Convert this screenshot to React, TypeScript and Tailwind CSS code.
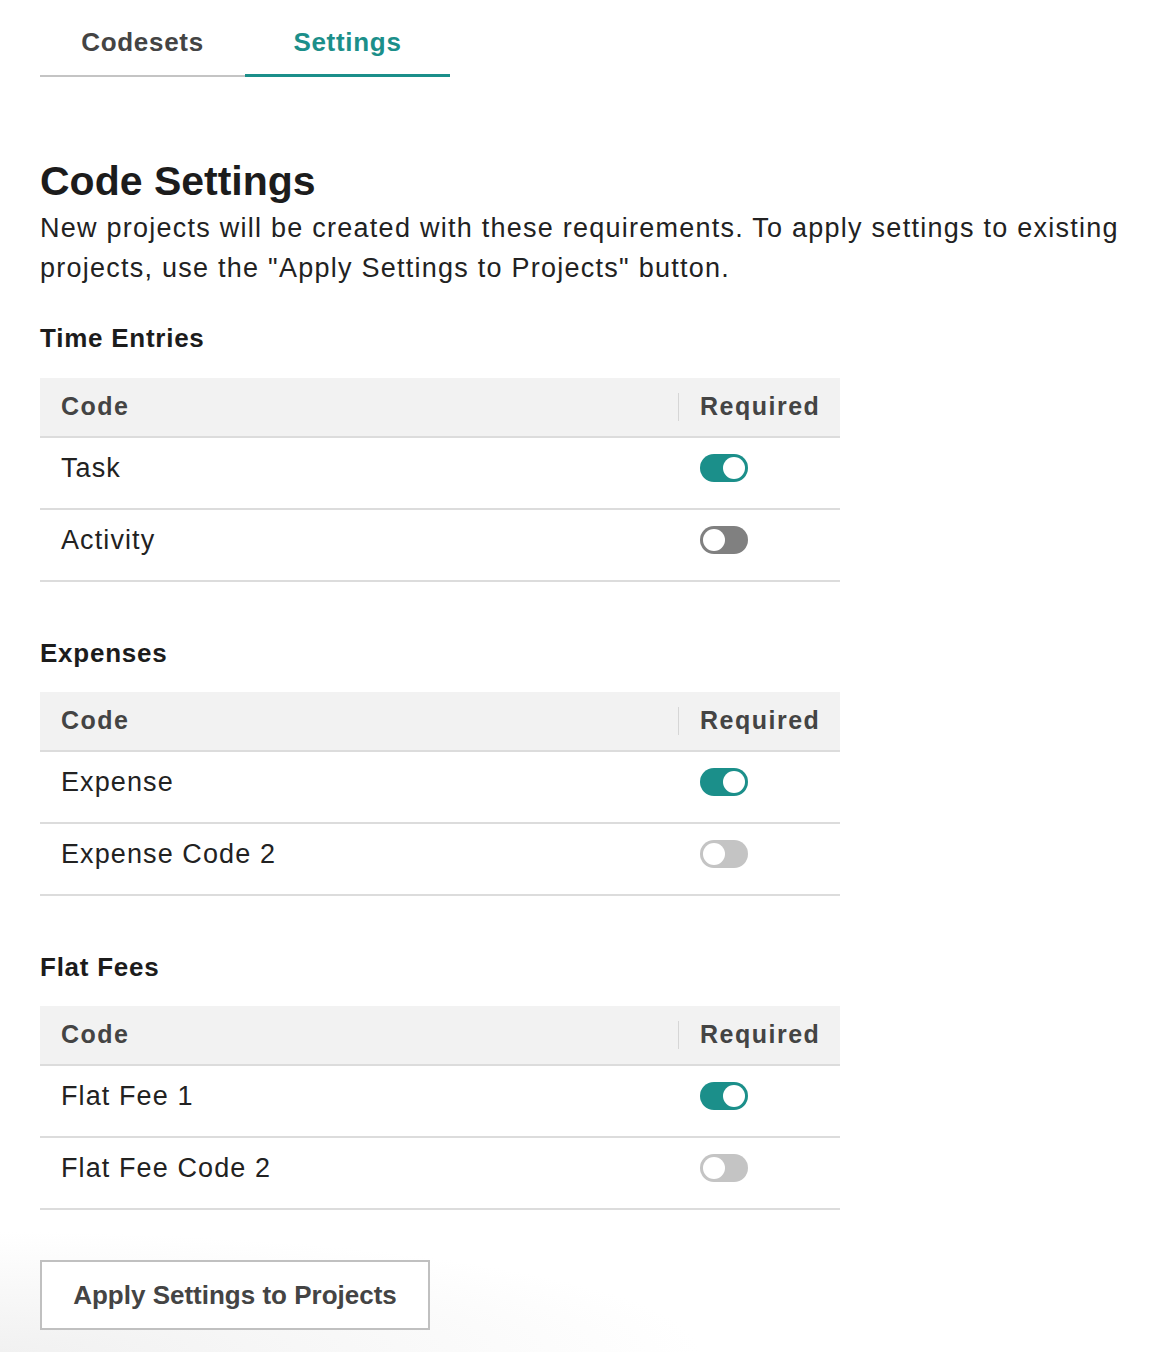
const sections = [
  {
    title: "Time Entries",
    rows: [
      { name: "Task", on: true, tone: "" },
      { name: "Activity", on: false, tone: "dark" },
    ],
  },
  {
    title: "Expenses",
    rows: [
      { name: "Expense", on: true, tone: "" },
      { name: "Expense Code 2", on: false, tone: "light" },
    ],
  },
  {
    title: "Flat Fees",
    rows: [
      { name: "Flat Fee 1", on: true, tone: "" },
      { name: "Flat Fee Code 2", on: false, tone: "light" },
    ],
  },
];

const Toggle = ({ on, tone }: { on: boolean; tone: string }) => {
  const track = on ? "bg-[#1b8f8a]" : tone === "dark" ? "bg-[#808080]" : "bg-[#c4c4c4]";
  return (
    <div className={`w-12 h-7 rounded-full flex items-center px-[3px] ${track} ${on ? "justify-end" : "justify-start"}`}>
      <div className="w-[22px] h-[22px] rounded-full bg-white" />
    </div>
  );
};

const App = () => {
  return (
    <div
      className="min-h-[1352px] bg-[radial-gradient(ellipse_700px_120px_at_0%_100%,#f1f1f1,#ffffff)] text-[#222]"
      style={{ fontFamily: '"Liberation Sans", Arial, sans-serif' }}
    >
      <div className="pl-10 pr-6">
        {/* Tabs */}
        <div className="flex pt-[22px]">
          <div className="w-[205px] h-[55px] flex items-start justify-center border-b-2 border-[#c4c4c4] text-[26px] font-bold text-[#444] tracking-[0.7px] leading-[40px]">
            Codesets
          </div>
          <div className="w-[205px] h-[55px] flex items-start justify-center border-b-[3px] border-[#1b8f8a] text-[26px] font-bold text-[#1b8f8a] tracking-[0.7px] leading-[40px]">
            Settings
          </div>
        </div>

        {/* Heading */}
        <h1 className="mt-[80px] text-[41px] font-bold leading-[48px] text-[#1c1c1c]">Code Settings</h1>
        <p className="mt-[3px] text-[27px] leading-[40px] tracking-[1.25px] text-[#222]">
          New projects will be created with these requirements. To apply settings to existing projects, use the "Apply Settings to Projects" button.
        </p>

        {sections.map((s, i) => (
          <div key={s.title} className={i === 0 ? "mt-[34px]" : "mt-[55px]"}>
            <h2 className="text-[26px] font-bold leading-[32px] tracking-[0.75px] text-[#1c1c1c]">{s.title}</h2>
            <div className={`${i === 0 ? "mt-[24px]" : "mt-[23px]"} w-[800px]`}>
              <div className="h-[60px] bg-[#f2f2f2] border-b-2 border-[#dcdcdc] flex items-center text-[25px] font-bold text-[#444] tracking-[1.5px]">
                <div className="flex-1 pl-[21px]">Code</div>
                <div className="w-px h-[28px] bg-[#d6d6d6]" />
                <div className="w-[161px] pl-[21px]">Required</div>
              </div>
              {s.rows.map((r) => (
                <div key={r.name} className="h-[72px] pb-[10px] border-b-2 border-[#dcdcdc] flex items-center text-[27px] tracking-[1.1px]">
                  <div className="flex-1 pl-[21px]">{r.name}</div>
                  <div className="w-[140px]">
                    <Toggle on={r.on} tone={r.tone} />
                  </div>
                </div>
              ))}
            </div>
          </div>
        ))}

        <button className="mt-[50px] w-[390px] h-[70px] border-2 border-[#c0c0c0] bg-white text-[26px] font-bold text-[#444]">
          Apply Settings to Projects
        </button>
      </div>
    </div>
  );
};

export default App;
